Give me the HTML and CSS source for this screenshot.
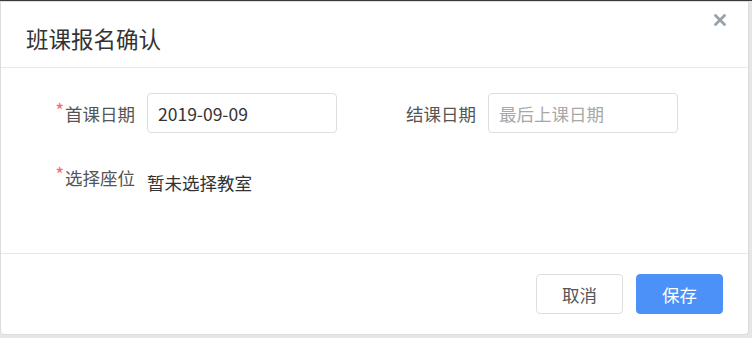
FILE: index.html
```html
<!DOCTYPE html>
<html lang="zh-CN">
<head>
    <meta charset="UTF-8">
    <meta name="viewport" content="width=device-width, initial-scale=1.0">
    <title>班课报名确认</title>
    <link rel="stylesheet" href="styles.css">
</head>
<body>
    <div class="modal">
        <div class="modal-header">
            <h2>班课报名确认</h2>
            <svg class="close" width="12" height="12" viewBox="0 0 12 12">
                <path d="M1.5 1.5 L10.5 10.5 M10.5 1.5 L1.5 10.5" stroke="#9ba1a9" stroke-width="2.8" stroke-linecap="round"/>
            </svg>
        </div>
        <div class="modal-body">
            <div class="form-row">
                <div class="form-item">
                    <label class="required">首课日期</label>
                    <input type="text" value="2019-09-09">
                </div>
                <div class="form-item">
                    <label>结课日期</label>
                    <input type="text" placeholder="最后上课日期">
                </div>
            </div>
            <div class="form-row">
                <div class="form-item">
                    <label class="required">选择座位</label>
                    <span class="value">暂未选择教室</span>
                </div>
            </div>
        </div>
        <div class="modal-footer">
            <button class="btn">取消</button>
            <button class="btn btn-primary">保存</button>
        </div>
    </div>
</body>
</html>
```

FILE: styles.css
```css
body {
    margin: 0;
    background: #e6e6e6;
    border-top: 1px solid #3a3a3a;
    height: 337px;
    overflow: hidden;
    font-family: "Noto Sans CJK SC", "Noto Sans", sans-serif;
}
.modal {
    width: 747px;
    height: 332px;
    background: white;
    border: 1px solid #dcdcdc;
    border-radius: 0 0 4px 4px;
    display: flex;
    flex-direction: column;
}
.modal-header {
    position: relative;
    height: 65px;
    border-bottom: 1px solid #e8e8e8;
    padding-left: 25px;
}
.modal-header h2 {
    margin: 0;
    padding-top: 21px;
    font-size: 22.5px;
    line-height: 30px;
    font-weight: normal;
    color: #333;
}
.close {
    position: absolute;
    top: 12px;
    right: 22px;
}
.modal-body {
    flex: 1;
    padding: 25px 0 0 34px;
}
.form-row {
    display: flex;
    gap: 39px;
    margin-bottom: 24px;
}
.form-item {
    display: flex;
    align-items: center;
    height: 40px;
}
.form-item label {
    width: 100px;
    padding-right: 12px;
    text-align: right;
    font-size: 17.5px;
    color: #555;
}
.required::before {
    content: "*";
    color: #f56c6c;
    font-size: 19px;
    line-height: 1;
    vertical-align: 3px;
    margin-right: 1px;
}
.form-item input {
    box-sizing: border-box;
    width: 190px;
    height: 40px;
    border: 1px solid #dedede;
    border-radius: 4px;
    padding: 0 10px;
    font-family: inherit;
    font-size: 17.5px;
    color: #333;
    outline: none;
}
.form-item input::placeholder {
    color: #a8a8a8;
}
.value {
    font-size: 17.5px;
    color: #333;
    padding-top: 10px;
}
.modal-footer {
    height: 80px;
    border-top: 1px solid #e8e8e8;
    display: flex;
    justify-content: flex-end;
    align-items: center;
    gap: 13px;
    padding-right: 25px;
}
.btn {
    width: 87px;
    height: 40px;
    border: 1px solid #dedede;
    border-radius: 4px;
    background: white;
    color: #555;
    font-family: inherit;
    font-size: 17.5px;
    cursor: pointer;
}
.btn-primary {
    background: #4b91f7;
    border-color: #4b91f7;
    color: white;
}
```
